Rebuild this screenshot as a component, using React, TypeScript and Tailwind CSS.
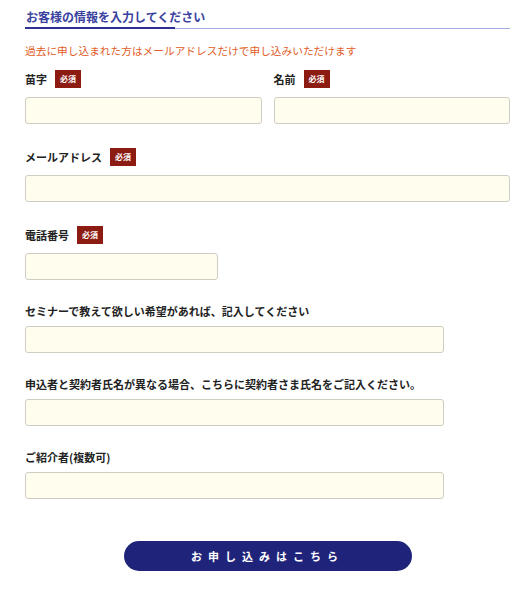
import React from 'react';

const font = { fontFamily: '"Noto Sans CJK JP", "Noto Sans", sans-serif' };

function Badge() {
  return (
    <span className="ml-[8px] inline-flex h-[18px] w-[26px] items-center justify-center bg-[#8c1b12] text-[8px] font-bold leading-none text-white">
      必須
    </span>
  );
}

interface FieldProps {
  label: string;
  required?: boolean;
  widthClass: string;
  first?: boolean;
}

function Field({ label, required, widthClass, first }: FieldProps) {
  return (
    <div className={`flex flex-col ${first ? '' : 'mt-[24px]'}`}>
      {required ? (
        <div className="mb-[9px] flex h-[18px] items-center">
          <span className="text-[11px] font-bold leading-none text-[#222]">{label}</span>
          <Badge />
        </div>
      ) : (
        <div className="mb-[8px] flex h-[14px] items-center">
          <span className="text-[11px] font-bold leading-none text-[#222]">{label}</span>
        </div>
      )}
      <input
        type="text"
        className={`h-[27px] rounded-[3px] border border-[#cfcdc4] bg-[#fffdee] px-2 text-[12px] outline-none ${widthClass}`}
      />
    </div>
  );
}

export default function App() {
  return (
    <div className="min-h-[600px] w-[512px] bg-white pl-[25px] pr-[2px]" style={font}>
      {/* Section heading */}
      <div className="pt-[9px]">
        <h2 className="pl-[1px] text-[12px] font-bold leading-[16px] text-[#3a42a0]">
          お客様の情報を入力してください
        </h2>
        <div className="mt-[2px] flex items-end">
          <div className="h-[2px] w-[150px] bg-[#2a3190]" />
          <div className="h-[1px] flex-1 bg-[#a4a9dd]" />
        </div>
      </div>

      <p className="mt-[14px] text-[10.7px] leading-[16px] text-[#e25c27]">
        過去に申し込まれた方はメールアドレスだけで申し込みいただけます
      </p>

      <div className="mt-[11px] flex flex-col">
        {/* Name row */}
        <div className="flex gap-[12px]">
          <div className="flex-1">
            <Field label="苗字" required widthClass="w-full" first />
          </div>
          <div className="flex-1">
            <Field label="名前" required widthClass="w-full" first />
          </div>
        </div>

        <Field label="メールアドレス" required widthClass="w-full" />
        <Field label="電話番号" required widthClass="w-[193px]" />
        <Field label="セミナーで教えて欲しい希望があれば、記入してください" widthClass="w-[419px]" />
        <Field label="申込者と契約者氏名が異なる場合、こちらに契約者さま氏名をご記入ください。" widthClass="w-[419px]" />
        <Field label="ご紹介者(複数可)" widthClass="w-[419px]" />
      </div>

      <div className="mt-[42px] flex justify-center">
        <button
          type="button"
          className="h-[30px] w-[288px] rounded-full bg-[#1f237a] text-[11px] font-bold tracking-[6px] text-white"
        >
          お申し込みはこちら
        </button>
      </div>
    </div>
  );
}
